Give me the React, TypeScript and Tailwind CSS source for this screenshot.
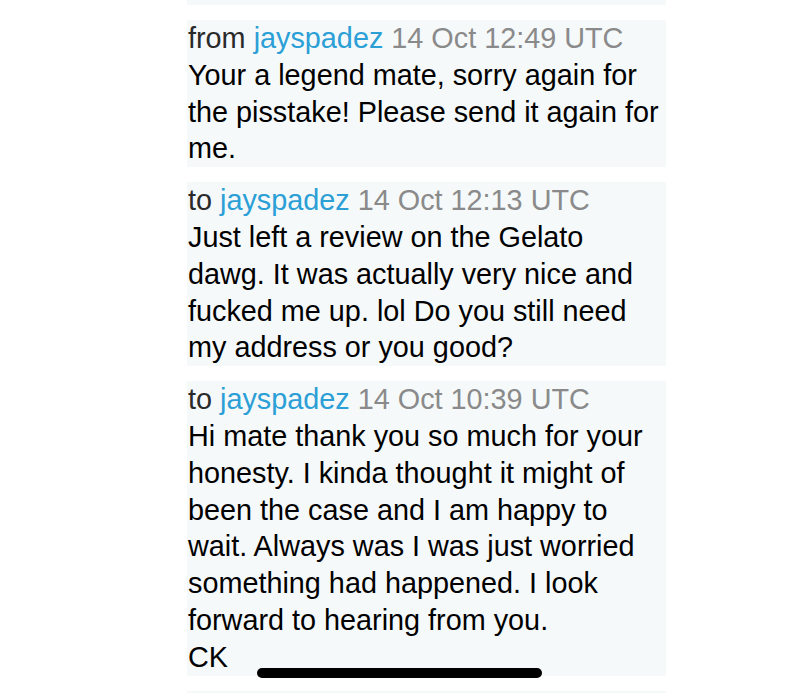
const messages = [
  {
    dir: 'from',
    when: '14 Oct 12:49 UTC',
    body: ['Your a legend mate, sorry again for the pisstake! Please send it again for me.'],
  },
  {
    dir: 'to',
    when: '14 Oct 12:13 UTC',
    body: ['Just left a review on the Gelato dawg. It was actually very nice and fucked me up. lol Do you still need my address or you good?'],
  },
  {
    dir: 'to',
    when: '14 Oct 10:39 UTC',
    body: [
      'Hi mate thank you so much for your honesty. I kinda thought it might of been the case and I am happy to wait. Always was I was just worried something had happened. I look forward to hearing from you.',
      'CK',
    ],
  },
];

function Message({ dir, when, body }: { dir: string; when: string; body: string[] }) {
  return (
    <div className="bg-[#f5f9fa] pl-[1px] pr-1">
      <div>
        <span className="text-[#2a2a2a]">{dir} </span>
        <span className="text-[#2b9fd6]">jayspadez</span>
        <span className="text-[#8a8a8a]"> {when}</span>
      </div>
      {body.map((line, i) => (
        <p key={i} className="text-black">
          {line}
        </p>
      ))}
    </div>
  );
}

export default function App() {
  return (
    <div className="relative h-[693px] w-[800px] overflow-hidden bg-white font-['Liberation_Sans',Arial,sans-serif] text-[28.8px] leading-[36.8px]">
      <div className="ml-[187px] flex w-[479px] flex-col gap-[15px] -mt-[10px]">
        {/* tail of the previous message */}
        <div className="h-[15px] bg-[#f5f9fa]" />
        {messages.map((m, i) => (
          <Message key={i} {...m} />
        ))}
        <div className="h-[40px] bg-[#f5f9fa]" />
      </div>

      {/* iOS home indicator */}
      <div className="absolute left-[257px] top-[668px] h-[10px] w-[285px] rounded-full bg-black" />
    </div>
  );
}
